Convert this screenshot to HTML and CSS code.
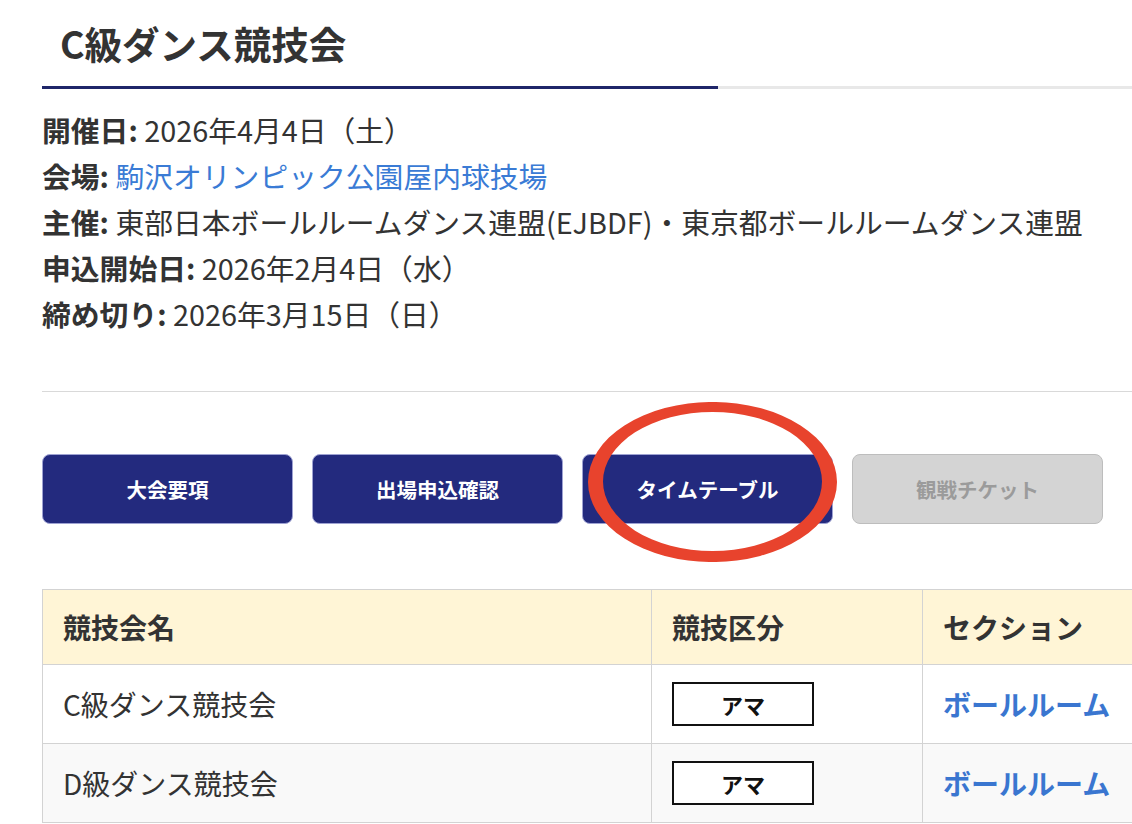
FILE: index.html
```html
<!DOCTYPE html>
<html>
<head>
    <meta charset="utf-8">
    <title>C級ダンス競技会</title>
    <link rel="stylesheet" href="styles.css">
</head>
<body>
    <div class="page">
        <h1 class="event-title">C級ダンス競技会</h1>
        <div class="title-rule"></div>

        <div class="event-info">
            <p><b>開催日:</b> 2026年4月4日（土）</p>
            <p><b>会場:</b> <a href="#">駒沢オリンピック公園屋内球技場</a></p>
            <p><b>主催:</b> 東部日本ボールルームダンス連盟(EJBDF)・東京都ボールルームダンス連盟</p>
            <p><b>申込開始日:</b> 2026年2月4日（水）</p>
            <p><b>締め切り:</b> 2026年3月15日（日）</p>
        </div>

        <hr class="divider">

        <div class="actions">
            <a class="btn" href="#">大会要項</a>
            <a class="btn" href="#">出場申込確認</a>
            <div class="btn-mark">
                <a class="btn" href="#">タイムテーブル</a>
                <!-- hand drawn circle round the timetable button -->
                <svg class="circle-mark" viewBox="0 0 249 160" width="249" height="160">
                    <path fill="#e8432d" fill-rule="evenodd"
                          d="M0 80 A124.5 80 0 1 0 249 80 A124.5 80 0 1 0 0 80 Z
                             M15 79.5 A109.5 69.5 0 1 0 234 79.5 A109.5 69.5 0 1 0 15 79.5 Z"/>
                </svg>
            </div>
            <span class="btn btn-disabled">観戦チケット</span>
        </div>

        <table class="events">
            <colgroup>
                <col class="col-name">
                <col class="col-type">
                <col class="col-section">
            </colgroup>
            <thead>
                <tr>
                    <th>競技会名</th>
                    <th>競技区分</th>
                    <th>セクション</th>
                </tr>
            </thead>
            <tbody>
                <tr>
                    <td>C級ダンス競技会</td>
                    <td><span class="badge">アマ</span></td>
                    <td><a class="section-link" href="#">ボールルーム</a></td>
                </tr>
                <tr class="alt">
                    <td>D級ダンス競技会</td>
                    <td><span class="badge">アマ</span></td>
                    <td><a class="section-link" href="#">ボールルーム</a></td>
                </tr>
            </tbody>
        </table>
    </div>
</body>
</html>
```

FILE: styles.css
```css
html, body {
    margin: 0;
    padding: 0;
    background: #fff;
    overflow: hidden;
}

body {
    font-family: "Noto Sans CJK JP", "Noto Sans", sans-serif;
    color: #333;
}

.page {
    width: 1160px;
    padding-left: 42px;
}

.event-title {
    margin: 21px 0 0 0;
    padding: 0 0 21px 18px;
    font-size: 37.5px;
    line-height: 44px;
    font-weight: bold;
    color: #333;
}

.title-rule {
    height: 3px;
    background: linear-gradient(to right, #1f2669 0, #1f2669 676px, #e8e8e8 676px);
}

.event-info {
    margin-top: 18px;
}

.event-info p {
    margin: 0;
    font-size: 28.8px;
    line-height: 46px;
    white-space: nowrap;
}

.event-info a {
    color: #3a7bd5;
    text-decoration: none;
}

.divider {
    margin: 54px 0 0 0;
    border: none;
    border-top: 1px solid #d9d9d9;
    height: 0;
}

.actions {
    display: flex;
    gap: 19px;
    margin-top: 62px;
}

.btn {
    box-sizing: border-box;
    display: flex;
    align-items: center;
    justify-content: center;
    width: 251px;
    height: 70px;
    background-color: #232a7e;
    border: 1px solid #9ea2d2;
    border-radius: 8px;
    color: #fff;
    font-size: 20.5px;
    font-weight: bold;
    text-decoration: none;
}

.btn-disabled {
    background-color: #d4d4d4;
    border-color: #bdbdbd;
    color: #9b9b9b;
}

.btn-mark {
    position: relative;
}

.circle-mark {
    position: absolute;
    left: 6px;
    top: -52px;
    pointer-events: none;
}

.events {
    margin-top: 65px;
    border-collapse: collapse;
    table-layout: fixed;
    width: 1160px;
}

.col-name { width: 609px; }
.col-type { width: 271px; }

.events th,
.events td {
    border: 1px solid #d3d3d3;
    padding: 17px 20px;
    text-align: left;
    font-size: 28px;
    line-height: 40px;
    white-space: nowrap;
}

.events th {
    background-color: #fff5d6;
    font-weight: bold;
}

.events td {
    line-height: 44px;
}

.events tr.alt td {
    background-color: #f9f9f9;
}

.badge {
    box-sizing: border-box;
    display: inline-block;
    vertical-align: top;
    width: 142px;
    height: 44px;
    line-height: 40px;
    border: 2px solid #111;
    background: #fff;
    text-align: center;
    color: #111;
    font-size: 22px;
    font-weight: bold;
}

.section-link {
    color: #3a76d0;
    font-weight: bold;
    text-decoration: none;
}
```
